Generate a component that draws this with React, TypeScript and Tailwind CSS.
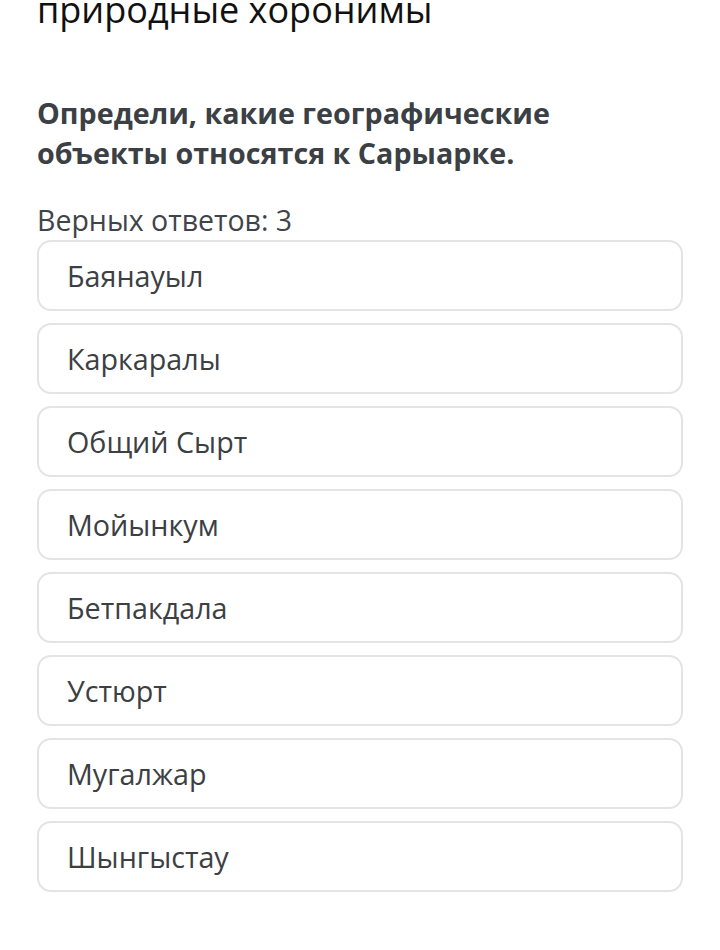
const options = [
  "Баянауыл",
  "Каркаралы",
  "Общий Сырт",
  "Мойынкум",
  "Бетпакдала",
  "Устюрт",
  "Мугалжар",
  "Шынгыстау",
];

export default function App() {
  return (
    <div
      className="min-h-[950px] overflow-hidden bg-white px-[37px]"
      style={{ fontFamily: '"Open Sans", "Noto Sans", sans-serif' }}
    >
      {/* heading cut off at the top of the screen */}
      <h2 className="-mt-[10px] text-[36px] leading-[40px] text-[#111]">
        природные хоронимы
      </h2>

      <p className="mt-[63px] text-[28.7px] font-bold leading-[40px] text-[#3b4045]">
        Определи, какие географические
        <br />
        объекты относятся к Сарыарке.
      </p>

      <div className="mt-[29px] text-[28.5px] leading-[36px] text-[#3f4448]">
        Верных ответов: 3
      </div>

      <div className="mt-[2px] flex flex-col gap-[12px]">
        {options.map((o) => (
          <div
            key={o}
            className="flex h-[71px] items-center rounded-[14px] border-2 border-[#e4e4e4] bg-white pl-[28px] text-[28.7px] text-[#3c4043]"
          >
            {o}
          </div>
        ))}
      </div>
    </div>
  );
}
